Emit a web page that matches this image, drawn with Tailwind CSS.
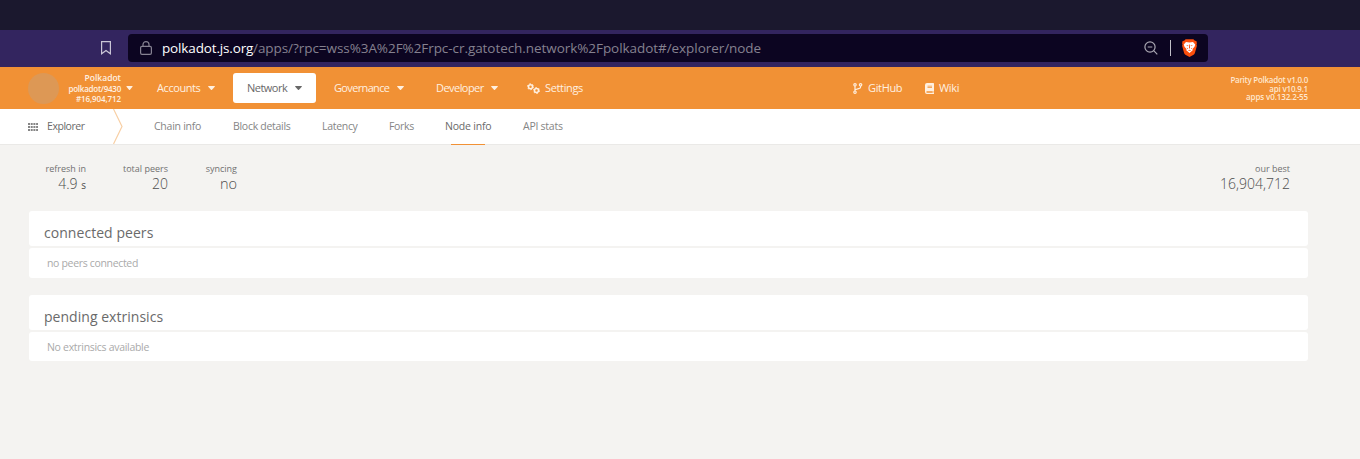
<!DOCTYPE html>
<html lang="en">
<head>
<meta charset="utf-8">
<title>Polkadot/Substrate Portal</title>
<script src="https://cdn.jsdelivr.net/npm/@tailwindcss/browser@4"></script>
</head>
<body class="h-[459px] overflow-hidden bg-[#f4f3f1] font-['Open_Sans','Noto_Sans',sans-serif] text-[11px] whitespace-nowrap text-[#4e4e4e]">
<svg class="hidden"><symbol id="caret" viewBox="0 0 8 5"><path fill="currentColor" d="M.7 0h6.6q.9 0 .4.8L4.6 4.6q-.6.6-1.2 0L.3.8Q-.2 0 .7 0z"/></symbol></svg>

<div class="h-[30px] bg-[#1b182e]"></div>
<div class="flex h-[37px] items-center bg-[#33255f] pl-[101px]">
  <svg class="mb-px h-[14px] w-[10px]" viewBox="0 0 10 14" fill="none" stroke="#c9c5d6" stroke-width="1.2"><path d="M.6.6h8.8v12.2L5 9.6.6 12.800z"/></svg>
  <div class="mt-px mb-[2px] ml-[17px] flex h-[28px] w-[1080px] items-center rounded-[4px] bg-[#0c0521]">
    <svg class="ml-[12px] h-[14px] w-[12px]" viewBox="0 0 12 14" fill="none" stroke="#868292" stroke-width="1.2"><rect x=".6" y="5.3" width="10.8" height="8" rx="1.4"/><path d="M3 5.3V3.6a3 3 0 0 1 6 0v1.7"/></svg>
    <div class="ml-[10px] w-[982px] text-[13.5px] text-[#85818f]"><span class="inline-block w-[91px] tracking-[-0.150px] text-white">polkadot.js.org</span><span class="tracking-[-0.060px]">/apps/?rpc=wss%3A%2F%2Frpc-cr.gatotech.network%2Fpolkadot#/explorer/node</span></div>
    <svg class="h-[14px] w-[14px]" viewBox="0 0 14 14" fill="none" stroke="#aaa7b2" stroke-width="1.2"><circle cx="6" cy="6" r="5.1"/><path d="M3.7 6h4.6M9.7 9.7l3.6 3.6"/></svg>
    <div class="ml-[12px] h-[16px] w-px bg-[#c2c0c8]"></div>
    <svg class="ml-[11px] h-[18px] w-[15px]" viewBox="0 0 15 18"><path fill="#fb4f0c" d="M3.600.2h7.800l1.500 1.600 1.500.1.500 2.400-.4 1.300.4 1.200-2 7.200q-.4 1-1.300 1.700L7.500 18l-4.100-2.300q-.9-.7-1.300-1.700L.1 6.800l.4-1.200L.1 4.300l.5-2.400 1.500-.1z"/><path fill="#fff" d="M4 3l3.500.6L11 3l2.200 2.600-.7 2.200-2 2.300.2 1.200-3.200 2.600-3.200-2.600.2-1.200-2-2.300-.7-2.200z"/><path fill="#fb4f0c" d="M4 6.100l2.500.3-.6.900zM11 6.100l-2.500.3.600.9zM7.150 5.500h.7l.2 3.700-.55.4-.55-.4zM4.800 8.600l1.400 1.300-1 .2zM10.200 8.600l-1.400 1.300 1 .2zM5.700 11.500l1.800-.7 1.800.7-1.800.3z"/></svg>
  </div>
</div>

<header class="flex h-[42px] items-center bg-[#f19135] text-[#fff0e0]">
  <div class="ml-[28px] size-[31px] rounded-full bg-[#dd9855]"></div>
  <div class="w-[62px] text-right text-[8px] leading-[9px] font-semibold">
    <div class="mb-[2px] text-[8.5px]">Polkadot</div>
    <div class="mb-px tracking-[-0.250px]">polkadot/9430</div>
    <div class="tracking-[-0.1px]">#16,904,712</div>
  </div>
  <svg class="ml-[5px] h-[4px] w-[7px]"><use href="#caret"/></svg>
  <nav class="flex items-center">
    <div class="ml-[24px] flex w-[76px] items-center"><span class="w-[51px] tracking-[-0.420px]">Accounts</span><svg class="h-[4px] w-[7px]" viewBox="0 0 8 5" preserveAspectRatio="none"><use href="#caret" width="8" height="5"/></svg></div>
    <div class="flex h-[30px] w-[83px] items-center rounded-[3px] bg-white pl-[14px] text-[#686868]"><span class="w-[48px] tracking-[-0.520px]">Network</span><svg class="h-[4px] w-[7px]" viewBox="0 0 8 5" preserveAspectRatio="none"><use href="#caret" width="8" height="5"/></svg></div>
    <div class="ml-[18px] flex w-[102px] items-center"><span class="w-[63px] tracking-[-0.650px]">Governance</span><svg class="h-[4px] w-[7px]" viewBox="0 0 8 5" preserveAspectRatio="none"><use href="#caret" width="8" height="5"/></svg></div>
    <div class="flex w-[91px] items-center"><span class="w-[55px] tracking-[-0.550px]">Developer</span><svg class="h-[4px] w-[7px]" viewBox="0 0 8 5" preserveAspectRatio="none"><use href="#caret" width="8" height="5"/></svg></div>
    <div class="flex w-[326px] items-center"><svg class="mr-[5px] h-[11px] w-[13px]" viewBox="0 0 13 11" fill="none" stroke="currentColor"><circle cx="3.500" cy="3.700" r="2" stroke-width="1.500"/><circle cx="3.500" cy="3.700" r="3" stroke-width="1" stroke-dasharray="1.570 1.570"/><circle cx="9.500" cy="7.500" r="2" stroke-width="1.500"/><circle cx="9.500" cy="7.500" r="3" stroke-width="1" stroke-dasharray="1.570 1.570"/></svg><span class="tracking-[-0.35px]">Settings</span></div>
    <div class="flex w-[72px] items-center"><svg class="mr-[5px] h-[11px] w-[10px]" viewBox="0 0 10 11" fill="none" stroke="currentColor" stroke-width="1.200"><circle cx="2" cy="1.800" r="1.200"/><circle cx="2" cy="9.200" r="1.200"/><circle cx="7.600" cy="1.800" r="1.200"/><path d="M2 3v5M7.600 3v1q0 1.500-2 1.700L2 6.800"/></svg><span class="tracking-[-0.35px]">GitHub</span></div>
    <div class="flex items-center"><svg class="mr-[5px] h-[11px] w-[9px]" viewBox="0 0 9 11"><path fill="currentColor" fill-rule="evenodd" d="M2 0h6.300q.7 0 .7.700v7q0 .4-.4.600v1.400h.4V11H2Q0 11 0 9V2Q0 0 2 0zM2.500 2.700v.7H7v-.7zM2.500 4.200v.7H7v-.7zM2 8.300q-.7 0-.7.700t.7.700h5.700V8.300z"/></svg><span class="tracking-[-0.35px]">Wiki</span></div>
  </nav>
  <div class="mt-[2px] mr-[52px] ml-auto text-right text-[8px] leading-[8.500px] font-semibold text-[#ffe7ce]">
    <div class="tracking-[-0.270px]">Parity Polkadot v1.0.0</div>
    <div class="tracking-[-0.2px]">api v10.9.1</div>
    <div class="tracking-[-0.120px]">apps v0.132.2-55</div>
  </div>
</header>

<nav class="flex h-[36px] items-center border-b border-[#eae9e7] bg-white pl-[28px] text-[10.500px] text-[#858585]">
  <svg class="h-[8px] w-[10px]" viewBox="0 0 10 8" fill="#858585"><path d="M0 0h2v2H0zM2.700 0h2v2h-2zM5.400 0h2v2h-2zM8.100 0h1.900v2H8.100zM0 3h2v2H0zM2.700 3h2v2h-2zM5.400 3h2v2h-2zM8.100 3h1.900v2H8.100zM0 6h2v2H0zM2.700 6h2v2h-2zM5.400 6h2v2h-2zM8.100 6h1.900v2H8.100z"/></svg>
  <span class="ml-[9px] w-[66px] tracking-[-0.450px] text-[#6a6a6a]">Explorer</span>
  <svg class="h-[35px] w-[10px]" viewBox="0 0 10 35" fill="none" stroke="#f8cfa4" stroke-width="1.200"><path d="M.5 0L9 17.500.5 35"/></svg>
  <div class="ml-[31px] flex h-full items-center">
    <span class="w-[79px] tracking-[-0.250px]">Chain info</span>
    <span class="w-[89px] tracking-[-0.280px]">Block details</span>
    <span class="w-[67px] tracking-[-0.3px]">Latency</span>
    <span class="w-[56px] tracking-[-0.350px]">Forks</span>
    <div class="flex h-[36px] w-[78px] flex-col text-[#6a6a6a]"><span class="leading-[34px] tracking-[-0.2px]">Node info</span><div class="mt-px ml-[6px] h-px w-[34px] bg-[#f19135]"></div></div>
    <span class="tracking-[-0.250px]">API stats</span>
  </div>
</nav>

<main class="pr-[52px] pl-[29px]">
  <section class="flex h-[66px] pt-[17px] text-right text-[9px] leading-[13px] text-[#707070]">
    <div class="w-[57px]"><div>refresh in</div><div class="text-[14px] leading-[17px] font-light text-[#4e4e4e]">4.9 <span class="text-[10px] font-normal">s</span></div></div>
    <div class="w-[82px]"><div>total peers</div><div class="text-[14px] leading-[17px] font-light text-[#4e4e4e]">20</div></div>
    <div class="w-[69px]"><div>syncing</div><div class="text-[14.500px] leading-[17px] font-light text-[#4e4e4e]">no</div></div>
    <div class="mr-[18px] ml-auto"><div>our best</div><div class="text-[14px] leading-[17px] font-light text-[#4e4e4e]">16,904,712</div></div>
  </section>
  <section>
    <h1 class="h-[35px] rounded-[3px] bg-white pt-[12px] pl-[15px] text-[14px] leading-[20px] tracking-[0.050px] text-[#6a6a6a]">connected peers</h1>
    <div class="mt-[2px] h-[30px] rounded-[3px] bg-white pl-[18px] text-[10.500px] leading-[30px] tracking-[-0.330px] text-[#aaa]">no peers connected</div>
  </section>
  <section class="mt-[17px]">
    <h1 class="h-[35px] rounded-[3px] bg-white pt-[12px] pl-[15px] text-[14px] leading-[20px] tracking-[0.030px] text-[#6a6a6a]">pending extrinsics</h1>
    <div class="mt-[2px] h-[29px] rounded-[3px] bg-white pl-[18px] text-[10.500px] leading-[30px] tracking-[-0.300px] text-[#aaa]">No extrinsics available</div>
  </section>
</main>
</body>
</html>
